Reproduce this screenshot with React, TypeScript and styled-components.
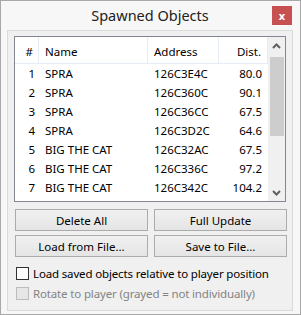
import React from "react";
import styled, { createGlobalStyle } from "styled-components";

const GlobalStyle = createGlobalStyle`
  html, body {
    margin: 0;
    padding: 0;
    background: #ffffff;
  }
  body {
    font-family: "Noto Sans", "Open Sans", sans-serif;
    font-size: 11.5px;
    color: #000;
  }
`;

interface IRow {
  id: number;
  name: string;
  address: string;
  dist: string;
}

const rows: IRow[] = [
  { id: 1, name: "SPRA", address: "126C3E4C", dist: "80.0" },
  { id: 2, name: "SPRA", address: "126C360C", dist: "90.1" },
  { id: 3, name: "SPRA", address: "126C36CC", dist: "67.5" },
  { id: 4, name: "SPRA", address: "126C3D2C", dist: "64.6" },
  { id: 5, name: "BIG THE CAT", address: "126C32AC", dist: "67.5" },
  { id: 6, name: "BIG THE CAT", address: "126C336C", dist: "97.2" },
  { id: 7, name: "BIG THE CAT", address: "126C342C", dist: "104.2" },
];

const Chevron = ({ down }: { down?: boolean }) => (
  <svg width="9" height="6" viewBox="0 0 9 6">
    <polyline
      points={down ? "1,1 4.5,4.5 8,1" : "1,5 4.5,1.5 8,5"}
      fill="none"
      stroke="#606060"
      strokeWidth="2"
    />
  </svg>
);

const App = () => {
  return (
    <>
      <GlobalStyle />
      <Window>
        <TitleBar>
          <Title>Spawned Objects</Title>
          <CloseButton>x</CloseButton>
        </TitleBar>
        <Client>
          <ListBox>
            <ListMain>
              <HeaderRow>
                <HeadCell className="num">#</HeadCell>
                <HeadCell className="name">Name</HeadCell>
                <HeadCell className="addr">Address</HeadCell>
                <HeadCell className="dist">Dist.</HeadCell>
              </HeaderRow>
              {rows.map((r) => (
                <Row key={r.id}>
                  <Cell className="num">{r.id}</Cell>
                  <Cell className="name">{r.name}</Cell>
                  <Cell className="addr">{r.address}</Cell>
                  <Cell className="dist">{r.dist}</Cell>
                </Row>
              ))}
            </ListMain>
            <ScrollBar>
              <ScrollArrow>
                <Chevron />
              </ScrollArrow>
              <ScrollTrack>
                <Thumb />
              </ScrollTrack>
              <ScrollArrow>
                <Chevron down />
              </ScrollArrow>
            </ScrollBar>
          </ListBox>
          <ButtonGrid>
            <Button>Delete All</Button>
            <Button>Full Update</Button>
            <Button>Load from File...</Button>
            <Button>Save to File...</Button>
          </ButtonGrid>
          <CheckList>
            <CheckRow>
              <CheckBox />
              <span>Load saved objects relative to player position</span>
            </CheckRow>
            <CheckRow disabled>
              <CheckBox disabled />
              <span>Rotate to player (grayed = not individually)</span>
            </CheckRow>
          </CheckList>
        </Client>
      </Window>
    </>
  );
};
export default App;

const Window = styled.div`
  width: 301px;
  height: 315px;
  box-sizing: border-box;
  border: 1px solid #a8a8a8;
  background: #f7f7f7;
  display: flex;
  flex-direction: column;
  padding: 0 7px 3px 6px;
`;
const TitleBar = styled.div`
  height: 29px;
  display: flex;
  align-items: center;
  justify-content: center;
  position: relative;
`;
const Title = styled.div`
  font-size: 14.5px;
  color: #222;
  margin-top: -1px;
`;
const CloseButton = styled.div`
  position: absolute;
  right: 1px;
  top: 5px;
  width: 20px;
  height: 19px;
  background: #c75050;
  color: #fff;
  font-weight: 700;
  font-size: 11px;
  display: flex;
  align-items: center;
  justify-content: center;
  line-height: 1;
`;
const Client = styled.div`
  flex: 1;
  box-sizing: border-box;
  border: 1px solid #dadada;
  background: #f0f0f0;
  padding: 5px 6px 0 6px;
  display: flex;
  flex-direction: column;
`;
const ListBox = styled.div`
  width: 272px;
  height: 166px;
  box-sizing: border-box;
  border: 1px solid #828790;
  background: #fff;
  display: flex;
`;
const ListMain = styled.div`
  flex: 1;
  display: flex;
  flex-direction: column;
`;
const columns = `
  display: grid;
  grid-template-columns: 24px 109px 71px 49px;
`;
const HeaderRow = styled.div`
  ${columns}
  height: 27px;
  border-bottom: 1px solid #e5ecf5;
  box-sizing: border-box;
`;
const HeadCell = styled.div`
  display: flex;
  align-items: center;
  padding-top: 3px;
  border-right: 1px solid #e5ecf5;
  white-space: nowrap;
  &.num {
    justify-content: flex-end;
    padding-right: 5px;
  }
  &.name,
  &.addr {
    padding-left: 6px;
  }
  &.dist {
    justify-content: flex-end;
    padding-right: 6px;
  }
`;
const Row = styled.div`
  ${columns}
  height: 19px;
`;
const Cell = styled.div`
  display: flex;
  align-items: center;
  white-space: nowrap;
  color: #000;
  &.num {
    justify-content: flex-end;
    padding-right: 4px;
  }
  &.name,
  &.addr {
    padding-left: 6px;
  }
  &.dist {
    justify-content: flex-end;
    padding-right: 6px;
  }
`;
const ScrollBar = styled.div`
  width: 18px;
  background: #f0f0f0;
  display: flex;
  flex-direction: column;
`;
const ScrollArrow = styled.div`
  height: 17px;
  display: flex;
  align-items: center;
  justify-content: center;
`;
const ScrollTrack = styled.div`
  flex: 1;
  padding: 3px 1px 0 2px;
`;
const Thumb = styled.div`
  height: 79px;
  background: #cdcdcd;
`;
const ButtonGrid = styled.div`
  display: grid;
  grid-template-columns: 133px 133px;
  column-gap: 6px;
  row-gap: 4px;
  margin: 7px 0 0 1px;
`;
const Button = styled.div`
  height: 22px;
  box-sizing: border-box;
  border: 1px solid #acacac;
  background: linear-gradient(#f0f0f0, #e5e5e5);
  display: flex;
  align-items: center;
  justify-content: center;
  color: #000;
`;
const CheckList = styled.div`
  display: flex;
  flex-direction: column;
  margin-top: 6px;
`;
const CheckRow = styled.div<{ disabled?: boolean }>`
  display: flex;
  align-items: center;
  gap: 4px;
  height: 20px;
  margin-left: 2px;
  white-space: nowrap;
  letter-spacing: -0.15px;
  color: ${(p) => (p.disabled ? "#838383" : "#000")};
`;
const CheckBox = styled.div<{ disabled?: boolean }>`
  flex: none;
  width: 13px;
  height: 13px;
  box-sizing: border-box;
  border: 1px solid ${(p) => (p.disabled ? "#bcbcbc" : "#333")};
  background: ${(p) => (p.disabled ? "#e6e6e6" : "#fff")};
`;
